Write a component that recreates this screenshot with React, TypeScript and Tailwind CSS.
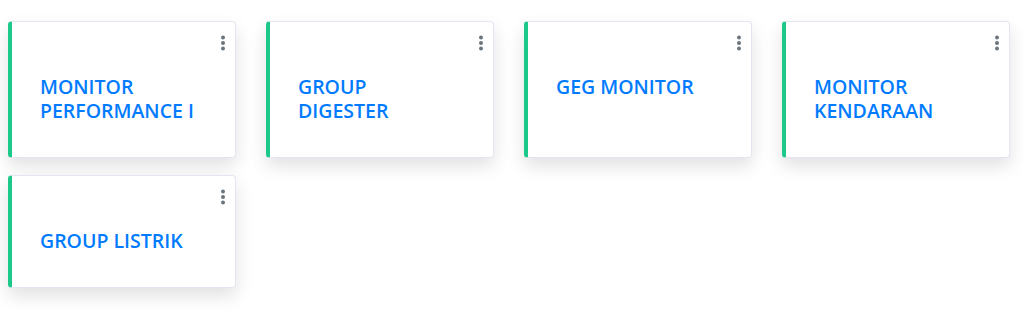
import React from 'react';

const GROUPS = [
  'MONITOR PERFORMANCE I',
  'GROUP DIGESTER',
  'GEG MONITOR',
  'MONITOR KENDARAAN',
  'GROUP LISTRIK',
];

function Kebab() {
  return (
    <svg width="6" height="16" viewBox="0 0 6 16" className="text-[#6c757d]">
      <circle cx="3" cy="2.5" r="2" fill="currentColor" />
      <circle cx="3" cy="8" r="2" fill="currentColor" />
      <circle cx="3" cy="13.5" r="2" fill="currentColor" />
    </svg>
  );
}

export default function App() {
  return (
    <div className="min-h-[316px] bg-white px-2 pt-[21px] font-['Open_Sans',sans-serif]">
      <div className="grid grid-cols-[repeat(4,228px)] gap-x-[30px] gap-y-[17px]">
        {GROUPS.map((name) => (
          <div
            key={name}
            className="relative flex rounded border border-[#e3e6f0] border-l-4 border-l-[#1cc88a] bg-white shadow-[0_8px_18px_rgba(0,0,0,0.12)]"
          >
            <button type="button" className="absolute top-[13px] right-[9px] p-0">
              <Kebab />
            </button>
            <h5 className="w-[156px] ml-7 pt-[53px] pb-[34px] text-[19.5px] leading-[24px] font-semibold text-[#007bff]">
              {name}
            </h5>
          </div>
        ))}
      </div>
    </div>
  );
}
